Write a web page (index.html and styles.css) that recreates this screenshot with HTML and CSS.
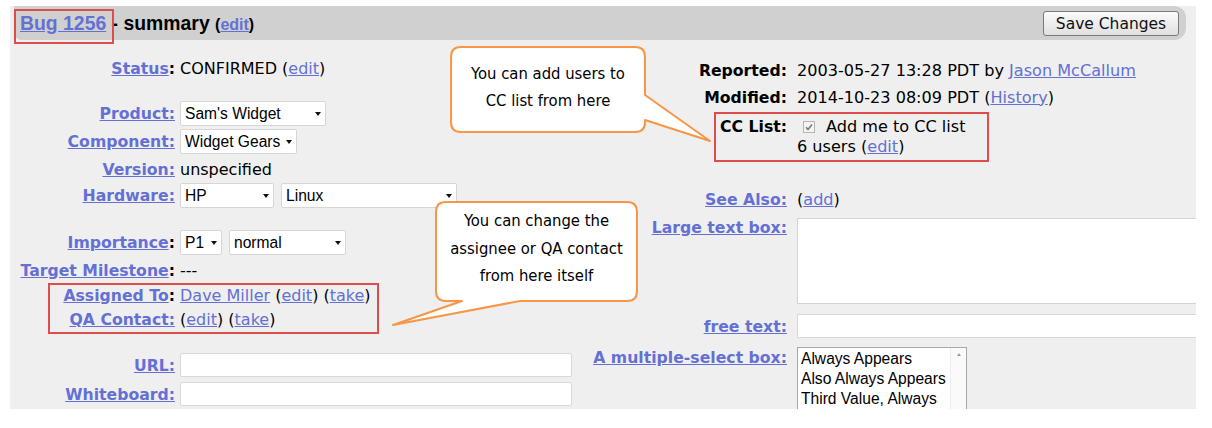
FILE: index.html
```html
<!DOCTYPE html>
<html>
<head>
<meta charset="utf-8">
<link rel="stylesheet" href="styles.css">
</head>
<body>
<div class="page">
  <div class="panel">
    <div class="header">
      <div class="title"><a href="#">Bug 1256</a> - summary <span class="title-edit">(<a href="#">edit</a>)</span></div>
      <button class="save">Save Changes</button>
    </div>
    <div class="content">
      <div class="col-left">
        <div class="row r-status"><span class="lbl"><a href="#">Status</a>:</span><span class="val">CONFIRMED (<a href="#">edit</a>)</span></div>
        <div class="row r-product"><span class="lbl"><a href="#">Product:</a></span><span class="val"><span class="sel sel-product"><span>Sam's Widget</span><i class="arr"></i></span></span></div>
        <div class="row r-component"><span class="lbl"><a href="#">Component:</a></span><span class="val"><span class="sel sel-component"><span>Widget Gears</span><i class="arr"></i></span></span></div>
        <div class="row r-version"><span class="lbl"><a href="#">Version:</a></span><span class="val">unspecified</span></div>
        <div class="row r-hardware"><span class="lbl"><a href="#">Hardware:</a></span><span class="val"><span class="sel sel-hp"><span>HP</span><i class="arr"></i></span><span class="sel sel-linux"><span>Linux</span><i class="arr"></i></span></span></div>
        <div class="row r-importance"><span class="lbl"><a href="#">Importance</a>:</span><span class="val"><span class="sel sel-p1"><span>P1</span><i class="arr"></i></span><span class="sel sel-normal"><span>normal</span><i class="arr"></i></span></span></div>
        <div class="row r-milestone"><span class="lbl"><a href="#">Target Milestone</a>:</span><span class="val">---</span></div>
        <div class="row r-assigned"><span class="lbl"><a href="#">Assigned To</a>:</span><span class="val"><a href="#">Dave Miller</a>&nbsp;(<a href="#">edit</a>)&nbsp;(<a href="#">take</a>)</span></div>
        <div class="row r-qa"><span class="lbl"><a href="#">QA Contact:</a></span><span class="val">(<a href="#">edit</a>)&nbsp;(<a href="#">take</a>)</span></div>
        <div class="row r-url"><span class="lbl"><a href="#">URL:</a></span><span class="val"><span class="txt"></span></span></div>
        <div class="row r-whiteboard"><span class="lbl"><a href="#">Whiteboard:</a></span><span class="val"><span class="txt"></span></span></div>
      </div>
      <div class="col-right">
        <div class="row r-reported"><span class="rlbl">Reported:</span><span class="rval">2003-05-27 13:28 PDT by <a href="#">Jason McCallum</a></span></div>
        <div class="row r-modified"><span class="rlbl">Modified:</span><span class="rval">2014-10-23 08:09 PDT (<a href="#">History</a>)</span></div>
        <div class="row r-cc"><span class="rlbl">CC List:</span>
          <span class="rval cc-val">
            <span class="cc-line"><svg class="chk" width="12" height="12" viewBox="0 0 12 12"><rect x="0.5" y="0.5" width="11" height="11" fill="#f4f4f4" stroke="#b4b4b4"/><path d="M3 6.2 L5 8.4 L9 3.4" fill="none" stroke="#7a7a7a" stroke-width="1.6"/></svg><span>Add me to CC list</span></span>
            <span class="cc-line2">6 users (<a href="#">edit</a>)</span>
          </span>
        </div>
        <div class="row r-seealso"><span class="rlbl"><a href="#">See Also:</a></span><span class="rval">(<a href="#">add</a>)</span></div>
        <div class="row r-large"><span class="rlbl"><a href="#">Large text box:</a></span><span class="rval"><span class="area"></span></span></div>
        <div class="row r-free"><span class="rlbl"><a href="#">free text:</a></span><span class="rval"><span class="txt-wide"></span></span></div>
        <div class="row r-multi"><span class="rlbl"><a href="#">A multiple-select box:</a></span>
          <span class="rval">
            <span class="listbox">
              <span class="items"><span>Always Appears</span><span>Also Always Appears</span><span>Third Value, Always</span></span>
              <span class="scroll"><i class="up"></i></span>
            </span>
          </span>
        </div>
      </div>
    </div>
  </div>

  <svg class="annot" width="1212" height="428" viewBox="0 0 1212 428">
    <rect x="15" y="10" width="98" height="33" fill="none" stroke="#e04c4c" stroke-width="2"/>
    <rect x="49" y="284" width="329" height="49" fill="none" stroke="#e04c4c" stroke-width="2"/>
    <rect x="715" y="113" width="273" height="48" fill="none" stroke="#e04c4c" stroke-width="2"/>
    <path d="M461,47 H635 Q645,47 645,57 V95 L710,141 L645,120 V122 Q645,132 635,132 H461 Q451,132 451,122 V57 Q451,47 461,47 Z" fill="#fff" stroke="#f79646" stroke-width="2" stroke-linejoin="round"/>
    <path d="M446,202 H627 Q637,202 637,212 V291 Q637,301 627,301 H520 L393,325 L462,301 H446 Q436,301 436,291 V212 Q436,202 446,202 Z" fill="#fff" stroke="#f79646" stroke-width="2" stroke-linejoin="round"/>
  </svg>
  <div class="note note-cc">You can add users to<br>CC list from here</div>
  <div class="note note-assign">You can change the<br>assignee or QA contact<br>from here itself</div>
</div>
</body>
</html>
```

FILE: styles.css
```css
body {
  margin: 0;
  background: #fff;
  font-family: "DejaVu Sans", Verdana, sans-serif;
  color: #000;
}
a {
  color: #6470d4;
  text-decoration: underline;
}
.page {
  position: relative;
  width: 1212px;
  height: 428px;
  overflow: hidden;
}
.panel {
  margin: 6px 0 0 10px;
  width: 1186px;
  height: 403px;
  background: #efefef;
  overflow: hidden;
}
.header {
  margin-left: 4px;
  width: 1172px;
  height: 34px;
  box-sizing: border-box;
  padding: 1px 7px 0 6px;
  background: #d0d0d0;
  border-radius: 0 12px 12px 8px;
  display: flex;
  align-items: center;
  justify-content: space-between;
}
.title {
  font-family: "Liberation Sans", Arial, sans-serif;
  font-weight: bold;
  font-size: 19.4px;
}
.title-edit {
  font-size: 16px;
}
.save {
  width: 136px;
  height: 25px;
  padding: 0;
  font-family: "DejaVu Sans", Verdana, sans-serif;
  font-size: 15.5px;
  color: #111;
  border: 1px solid #7a7a7a;
  border-radius: 3px;
  background: linear-gradient(#fbfbfb, #e0e0e0);
}
.content {
  display: flex;
}
.col-left {
  width: 580px;
  flex: none;
  display: flex;
  flex-direction: column;
}
.col-right {
  flex: 1;
  display: flex;
  flex-direction: column;
}
.row {
  display: flex;
  align-items: center;
  height: 24px;
  white-space: nowrap;
}
.lbl {
  width: 165px;
  flex: none;
  text-align: right;
  font-weight: bold;
  font-size: 15.7px;
}
.val {
  margin-left: 5px;
  font-size: 16px;
  display: flex;
  align-items: center;
  gap: 7px;
}
.r-assigned .val, .r-qa .val, .r-status .val {
  display: block;
}
.r-status { margin-top: 16px; }
.r-product { margin-top: 21px; height: 25px; }
.r-component { margin-top: 3px; height: 25px; }
.r-version { margin-top: 3px; }
.r-hardware { margin-top: 2px; height: 25px; }
.r-importance { margin-top: 22px; height: 25px; }
.r-milestone { margin-top: 3px; }
.r-assigned { margin-top: 1px; }
.r-qa { margin-top: 0; }
.r-url { margin-top: 22px; }
.r-whiteboard { margin-top: 5px; }

.sel {
  height: 25px;
  box-sizing: border-box;
  background: #fff;
  border: 1px solid #d6d6d6;
  border-radius: 2px;
  padding: 0 4px 0 4px;
  display: flex;
  align-items: center;
  justify-content: space-between;
  font-family: "Liberation Sans", Arial, sans-serif;
  font-size: 15.6px;
}
.arr {
  width: 0;
  height: 0;
  border-left: 3.5px solid transparent;
  border-right: 3.5px solid transparent;
  border-top: 4px solid #111;
}
.sel-product { width: 146px; }
.sel-component { width: 117px; }
.sel-hp { width: 94px; }
.sel-linux { width: 176px; }
.sel-p1 { width: 42px; }
.sel-normal { width: 117px; }

.txt {
  display: block;
  width: 392px;
  height: 24px;
  box-sizing: border-box;
  background: #fff;
  border: 1px solid #d8d8d8;
  border-radius: 2px;
}

.rlbl {
  width: 197px;
  flex: none;
  text-align: right;
  font-weight: bold;
  font-size: 15.7px;
}
.rval {
  margin-left: 10px;
  font-size: 16.1px;
}
.r-reported { margin-top: 18px; }
.r-modified { margin-top: 3px; }
.r-cc {
  margin-top: 8px;
  height: 40px;
  align-items: flex-start;
  line-height: 20px;
}
.cc-val {
  display: flex;
  flex-direction: column;
}
.cc-line {
  display: flex;
  align-items: center;
  gap: 11px;
  padding-left: 6px;
}
.chk { flex: none; }
.r-seealso { margin-top: 30px; }
.r-large {
  margin-top: 7px;
  height: 86px;
  align-items: flex-start;
  line-height: 20px;
}
.area {
  display: block;
  width: 500px;
  height: 86px;
  box-sizing: border-box;
  background: #fff;
  border: 1px solid #d4d4d4;
}
.r-free { margin-top: 10px; }
.txt-wide {
  display: block;
  width: 500px;
  height: 24px;
  box-sizing: border-box;
  background: #fff;
  border: 1px solid #d8d8d8;
}
.r-multi {
  margin-top: 9px;
  height: 70px;
  align-items: flex-start;
  line-height: 22px;
}
.listbox {
  display: flex;
  width: 170px;
  height: 70px;
  box-sizing: border-box;
  background: #fff;
  border: 1px solid #a8a8a8;
}
.items {
  flex: 1;
  display: flex;
  flex-direction: column;
  padding: 1px 0 0 3px;
  font-family: "Liberation Sans", Arial, sans-serif;
  font-size: 15.6px;
  line-height: 20px;
}
.scroll {
  width: 15px;
  border-left: 1px solid #ececec;
  background: #fafafa;
  display: flex;
  justify-content: center;
  padding-top: 5px;
}
.up {
  width: 0;
  height: 0;
  border-left: 2.5px solid transparent;
  border-right: 2.5px solid transparent;
  border-bottom: 3px solid #a0a0a0;
}

.annot {
  position: absolute;
  left: 0;
  top: 0;
  pointer-events: none;
}
.note {
  position: absolute;
  text-align: center;
  font-family: "DejaVu Sans Condensed", "Liberation Sans Narrow", "Liberation Sans", sans-serif;
  font-size: 16.5px;
  line-height: 27px;
  color: #000;
}
.note-cc {
  left: 451px;
  top: 60px;
  width: 194px;
}
.note-assign {
  left: 436px;
  top: 207px;
  width: 201px;
  line-height: 27.5px;
}
```
